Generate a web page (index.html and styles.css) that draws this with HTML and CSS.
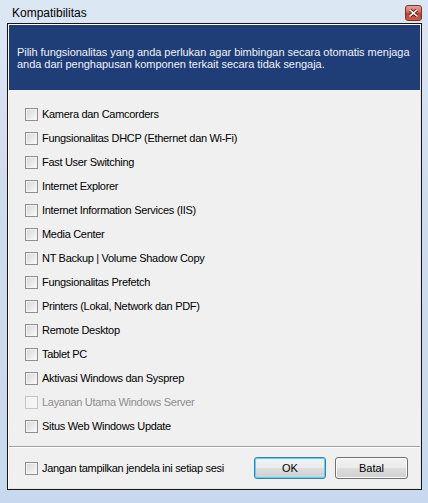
FILE: index.html
```html
<!DOCTYPE html>
<html lang="id">
<head>
  <meta charset="UTF-8" />
  <title>Kompatibilitas</title>
  <link rel="stylesheet" href="styles.css">
</head>
<body>
  <div class="window">
    <div class="titlebar">
      <span class="title">Kompatibilitas</span>
      <span class="close">
        <svg width="9" height="8" viewBox="0 0 9 8">
          <path d="M1 1 L8 7 M8 1 L1 7" stroke="#4a1a12" stroke-width="3.2" stroke-linecap="square" />
          <path d="M1 1 L8 7 M8 1 L1 7" stroke="#fff" stroke-width="1.6" stroke-linecap="square" />
        </svg>
      </span>
    </div>

    <div class="client">
      <div class="header">
        Pilih fungsionalitas yang anda perlukan agar bimbingan secara otomatis menjaga<br>
        anda dari penghapusan komponen terkait secara tidak sengaja.
      </div>

      <ul class="options">
        <li><span class="box"></span>Kamera dan Camcorders</li>
        <li><span class="box"></span>Fungsionalitas DHCP (Ethernet dan Wi-Fi)</li>
        <li><span class="box"></span>Fast User Switching</li>
        <li><span class="box"></span>Internet Explorer</li>
        <li><span class="box"></span>Internet Information Services (IIS)</li>
        <li><span class="box"></span>Media Center</li>
        <li><span class="box"></span>NT Backup | Volume Shadow Copy</li>
        <li><span class="box"></span>Fungsionalitas Prefetch</li>
        <li><span class="box"></span>Printers (Lokal, Network dan PDF)</li>
        <li><span class="box"></span>Remote Desktop</li>
        <li><span class="box"></span>Tablet PC</li>
        <li><span class="box"></span>Aktivasi Windows dan Sysprep</li>
        <li class="disabled"><span class="box"></span>Layanan Utama Windows Server</li>
        <li><span class="box"></span>Situs Web Windows Update</li>
      </ul>

      <div class="footer">
        <label class="dont-show"><span class="box"></span>Jangan tampilkan jendela ini setiap sesi</label>
        <button class="btn default">OK</button>
        <button class="btn">Batal</button>
      </div>
    </div>
  </div>
</body>
</html>
```

FILE: styles.css
```css
html, body {
  margin: 0;
  padding: 0;
}

body {
  font-family: 'Liberation Sans', Arial, sans-serif;
  font-size: 11px;
  color: #000;
  background: #dfe8f3;
}

.window {
  width: 428px;
  height: 503px;
  box-sizing: border-box;
  padding: 0 6px 13px 7px;
  background: linear-gradient(to bottom, #dce7f4 0%, #cfdcee 40%, #c8d8ee 100%);
}

.titlebar {
  height: 23px;
  display: flex;
  align-items: center;
  justify-content: space-between;
  padding-left: 5px;
}

.title {
  font-size: 12px;
  color: #000;
  margin-top: 3px;
}

.close {
  width: 15px;
  height: 14px;
  margin-top: 3px;
  border: 1px solid #7a3226;
  border-radius: 3px;
  background: linear-gradient(to bottom, #e8a293 0%, #d4644f 45%, #c2402b 55%, #cf5a42 100%);
  display: flex;
  align-items: center;
  justify-content: center;
}

.client {
  height: 467px;
  box-sizing: border-box;
  border: 1px solid #161616;
  box-shadow: inset 1px 1px 0 #fff, inset -1px -1px 0 #e6e6e6;
  padding: 1px;
  background: #f0f0f0;
  display: flex;
  flex-direction: column;
}

.header {
  background: #1f3e77;
  color: #eef2fa;
  line-height: 12px;
  padding: 21px 8px 20px;
  height: 24px;
  white-space: nowrap;
  letter-spacing: -0.04px;
}

.options {
  list-style: none;
  margin: 0;
  padding: 12px 0 0 16px;
  letter-spacing: -0.3px;
}

.options li {
  height: 24px;
  display: flex;
  align-items: center;
}

.box {
  width: 11px;
  height: 11px;
  border: 1px solid #8e8f8f;
  background: linear-gradient(135deg, #d6d6d6 0%, #f0f0f0 70%, #fbfbfb 100%);
  box-shadow: inset 0 0 0 1px #f4f4f4;
  margin-right: 4px;
  flex-shrink: 0;
}

.options li.disabled {
  color: #8d8d8d;
}

.options li.disabled .box {
  border-color: #c5c5c5;
  background: #f4f4f4;
}

.footer {
  margin-top: 8px;
  border-top: 1px solid #a0a0a0;
  box-shadow: inset 0 1px 0 #fff;
  display: flex;
  align-items: center;
  padding: 10px 0 0 16px;
}

.dont-show {
  display: flex;
  align-items: center;
  flex: 1;
  letter-spacing: -0.3px;
}

.btn {
  font-family: 'Liberation Sans', Arial, sans-serif;
  font-size: 11px;
  color: #000;
  width: 73px;
  height: 22px;
  margin-right: 12px;
  border: 1px solid #707070;
  border-radius: 3px;
  background: linear-gradient(to bottom, #f2f2f2 0%, #ebebeb 48%, #dddddd 52%, #cfcfcf 100%);
  box-shadow: inset 0 0 0 1px #fcfcfc;
  padding: 0;
}

.btn.default {
  width: 72px;
  margin-right: 9px;
  border-color: #3c7fb1;
  box-shadow: inset 0 0 0 1px #48d8fb;
}
```
